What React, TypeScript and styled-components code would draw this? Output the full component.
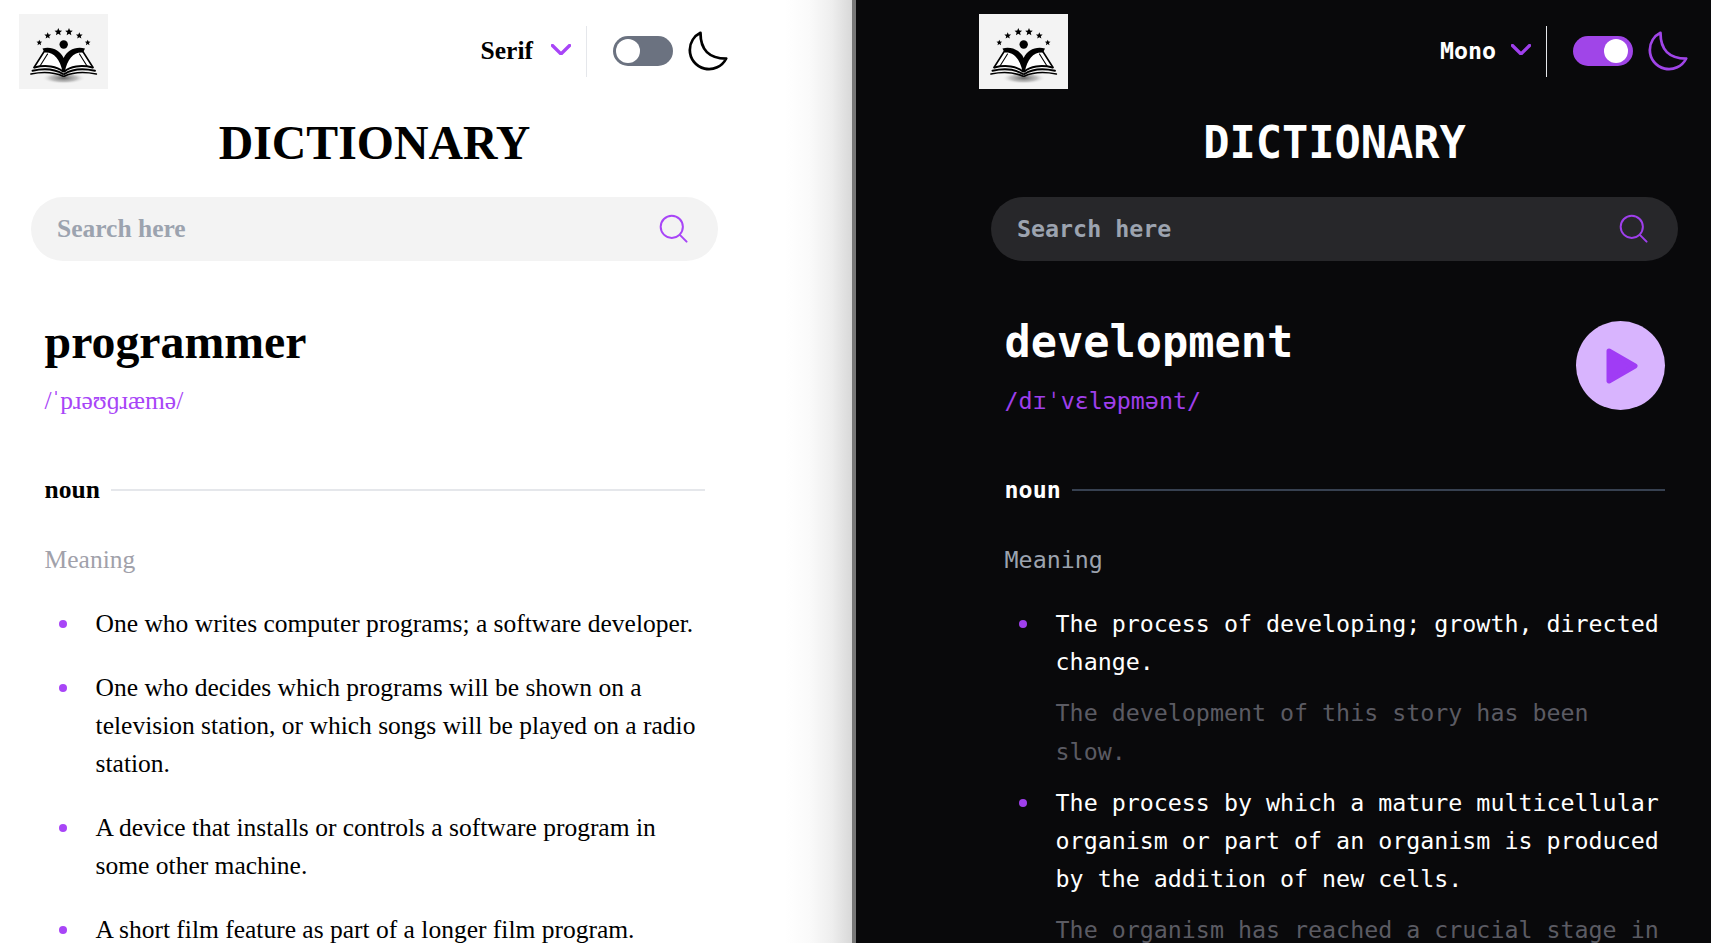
import React from "react";
import styled, { createGlobalStyle } from "styled-components";

const Global = createGlobalStyle`
  html, body { margin: 0; padding: 0; height: 100%; overflow: hidden; }
  * { box-sizing: border-box; }
`;

const Split = styled.main`
  display: grid;
  grid-template-columns: 852px 4px 855px;
  width: 1711px;
  height: 943px;
  overflow: hidden;
`;

const Pane = styled.section<{ $dark?: boolean }>`
  --fg: ${(p) => (p.$dark ? "#ffffff" : "#000000")};
  --accent: ${(p) => (p.$dark ? "#9f3fec" : "#a845f7")};
  --field: ${(p) => (p.$dark ? "#27272a" : "#f3f3f3")};
  --rule: ${(p) => (p.$dark ? "#374151" : "#e5e7eb")};
  --muted: ${(p) => (p.$dark ? "#9ca3af" : "#a1a1aa")};
  --hint: ${(p) => (p.$dark ? "#5b5b63" : "#71717a")};
  --divider: #e5e7eb;
  --picker-gap: ${(p) => (p.$dark ? "15px" : "18px")};
  --face: ${(p) => (p.$dark ? '"DejaVu Sans Mono", monospace' : '"Liberation Serif", serif')};
  --body-size: ${(p) => (p.$dark ? "23.3px" : "25.5px")};
  --display-size: ${(p) => (p.$dark ? "43.6px" : "47.8px")};
  height: 943px;
  overflow: hidden;
  padding-left: ${(p) => (p.$dark ? "123px" : "19px")};
  background: ${(p) =>
    p.$dark
      ? "#09090b"
      : "linear-gradient(to right, #fff 0, #fff 785px, #fafafa 810px, #eee 832px, #d8d8d8 852px)"};
  color: var(--fg);
  font-family: var(--face);
  font-size: var(--body-size);
  line-height: 38.4px;
`;

const Seam = styled.div`
  background: #787878;
`;

const Column = styled.div`
  width: 711px;
`;

const Header = styled.header`
  display: flex;
  align-items: center;
  justify-content: space-between;
  padding: 14px 2px 0 0;
`;

const LogoBox = styled.svg`
  display: block;
  width: 89px;
  height: 75px;
  flex: none;
`;

const Controls = styled.div`
  display: flex;
  align-items: center;
  margin-bottom: 1px;
`;

const FontPicker = styled.button`
  display: flex;
  align-items: center;
  gap: var(--picker-gap);
  padding: 0 15px 0 0;
  border: 0;
  background: none;
  color: var(--fg);
  font: bold var(--body-size) / 38.4px var(--face);
`;

const Chevron = styled.svg`
  width: 20px;
  height: 11.5px;
  margin-bottom: 3px;
  fill: none;
  stroke: var(--accent);
  stroke-width: 2.3;
  stroke-linecap: round;
  stroke-linejoin: round;
`;

const VRule = styled.span`
  width: 1px;
  height: 51px;
  background: var(--divider);
  margin-right: 26px;
`;

const Toggle = styled.button<{ $on?: boolean }>`
  position: relative;
  width: 60px;
  height: 30px;
  padding: 0;
  border: 0;
  border-radius: 15px;
  background: ${(p) => (p.$on ? "#a045e8" : "#6b7280")};
  &::after {
    content: "";
    position: absolute;
    top: 3px;
    left: ${(p) => (p.$on ? "31px" : "3px")};
    width: 24px;
    height: 24px;
    border-radius: 50%;
    background: #fff;
  }
`;

const Moon = styled.svg<{ $on?: boolean }>`
  width: 40px;
  height: 40px;
  margin-left: 15px;
  fill: none;
  stroke: ${(p) => (p.$on ? "#a045e8" : "#000")};
  stroke-width: 1.5;
  stroke-linecap: round;
  stroke-linejoin: round;
`;

const Title = styled.h1`
  margin: 18px 0 0;
  text-align: center;
  font-size: var(--display-size);
  line-height: 72px;
  font-weight: 700;
`;

const SearchBar = styled.form`
  display: flex;
  align-items: center;
  height: 64px;
  margin: 18px 12px 0;
  padding: 0 29px 0 26px;
  border-radius: 32px;
  background: var(--field);
`;

const SearchInput = styled.input`
  flex: 1;
  min-width: 0;
  padding: 0;
  border: 0;
  outline: 0;
  background: none;
  color: var(--fg);
  font: bold var(--body-size) / 38.4px var(--face);
  &::placeholder {
    color: #9ca3af;
    opacity: 1;
  }
`;

const SearchIcon = styled.svg`
  width: 30px;
  height: 30px;
  fill: none;
  stroke: var(--accent);
  stroke-width: 1.2;
  stroke-linecap: round;
  stroke-linejoin: round;
`;

const Entry = styled.article`
  padding: 49px 25px 0 25.6px;
`;

const WordRow = styled.div`
  display: flex;
  align-items: center;
  justify-content: space-between;
  min-height: 110.4px;
`;

const Word = styled.h2`
  margin: 0 0 8px;
  font-size: var(--display-size);
  line-height: 64px;
  font-weight: 700;
`;

const Phonetic = styled.p`
  margin: 0;
  color: var(--accent);
`;

const PlayButton = styled.button`
  display: flex;
  align-items: center;
  justify-content: center;
  width: 89px;
  height: 89px;
  padding: 2px 0 0 3px;
  border: 0;
  border-radius: 50%;
  background: #d8b4fe;
`;

const PlayGlyph = styled.svg`
  width: 36px;
  height: 40px;
  fill: #a03cf5;
  stroke: #a03cf5;
  stroke-width: 5;
  stroke-linejoin: round;
`;

const PartRow = styled.div`
  display: flex;
  align-items: center;
  gap: 11px;
  margin-top: 49px;
  padding-top: 2px;
  font-weight: 700;
  &::after {
    content: "";
    flex: 1;
    height: 2px;
    margin-top: -2px;
    background: var(--rule);
  }
`;

const Label = styled.p`
  margin: 31px 0 0;
  color: var(--muted);
`;

const Senses = styled.ul`
  margin: 26px 0 0;
  padding: 0 0 0 14px;
  list-style: none;
  line-height: 38.2px;
`;

const Sense = styled.li`
  display: grid;
  grid-template-columns: 8px 1fr;
  column-gap: 29px;
  padding-bottom: 12.8px;
  &::before {
    content: "";
    grid-row: 1;
    grid-column: 1;
    width: 8px;
    height: 8px;
    margin-top: 15px;
    border-radius: 50%;
    background: var(--accent);
  }
`;

const Definition = styled.p`
  grid-column: 2;
  margin: 0 0 12.8px;
`;

const Example = styled.p`
  grid-column: 2;
  margin: 0;
  color: var(--hint);
`;

const Star = ({ cx, cy, r }: { cx: number; cy: number; r: number }) => {
  const pts = Array.from({ length: 10 }, (_, i) => {
    const a = -Math.PI / 2 + (i * Math.PI) / 5;
    const d = i % 2 ? r * 0.45 : r;
    return `${(cx + d * Math.cos(a)).toFixed(2)},${(cy + d * Math.sin(a)).toFixed(2)}`;
  }).join(" ");
  return <polygon points={pts} fill="#000" />;
};

const Logo = ({ id }: { id: string }) => (
  <LogoBox viewBox="0 0 89 75" aria-label="Dictionary logo">
    <defs>
      <radialGradient id={id}>
        <stop offset="0" stopColor="#666" />
        <stop offset="0.6" stopColor="#aaa" stopOpacity="0.7" />
        <stop offset="1" stopColor="#f3f3f3" stopOpacity="0" />
      </radialGradient>
    </defs>
    <rect width="89" height="75" fill="#f3f3f3" />
    <ellipse cx="44.7" cy="64" rx="22" ry="6" fill={`url(#${id})`} />
    <Star cx={20.3} cy={28.7} r={3} />
    <Star cx={28.7} cy={21.7} r={3.5} />
    <Star cx={39.3} cy={18} r={4} />
    <Star cx={50} cy={18} r={4} />
    <Star cx={60.3} cy={21.7} r={3.5} />
    <Star cx={68.7} cy={28.7} r={3} />
    <circle cx="44.7" cy="30.5" r="4.2" fill="#000" />
    <path
      fill="#fff"
      d="M26 36 L15 55 C26 53 38 54 44.7 59 C51 54 63 53 74 55 L63.5 36 C55 38 48 44 44.7 52 C41 44 34 38 26 36 Z"
    />
    <path
      fill="#000"
      d="M23.5 34.5 C32 32 41 36 44.7 44 C48 36 57 32 66 34.5 L64 38.5 C55 37.5 48.5 44 45.8 58 L43.6 58 C41 44 34 37.5 25.5 38.5 Z"
    />
    <g fill="none" stroke="#000" strokeLinecap="round">
      <path strokeWidth="1.6" d="M25.5 37 L15 53.5" />
      <path strokeWidth="1.6" d="M63.5 37 L74 53.5" />
      <path strokeWidth="1.1" d="M28.5 40 L21 52" />
      <path strokeWidth="1.1" d="M60.5 40 L68 52" />
      <path strokeWidth="2" d="M15.5 53.5 C27 50.5 38 52.5 44 57.5" />
      <path strokeWidth="2" d="M73.5 53.5 C62 50.5 51 52.5 45.4 57.5" />
      <path strokeWidth="1.9" d="M13.5 56.8 C26 54 37 55.8 44 60" />
      <path strokeWidth="1.9" d="M76 56.8 C63 54 52 55.8 45.4 60" />
      <path strokeWidth="1.7" d="M12 60 C25 57.3 36 58.6 44.2 62.2" />
      <path strokeWidth="1.7" d="M77.3 60 C64 57.3 53 58.6 45.2 62.2" />
    </g>
  </LogoBox>
);

const ChevronIcon = () => (
  <Chevron viewBox="0 0 14 8" aria-hidden>
    <path d="M1 1l6 6 6-6" />
  </Chevron>
);

type SenseData = { text: string; example?: string };
type Panel = {
  dark?: boolean;
  font: string;
  word: string;
  phonetic: string;
  senses: SenseData[];
  playable?: boolean;
};

const panels: Panel[] = [
  {
    font: "Serif",
    word: "programmer",
    phonetic: "/ˈpɹəʊɡɹæmə/",
    senses: [
      { text: "One who writes computer programs; a software developer." },
      {
        text: "One who decides which programs will be shown on a television station, or which songs will be played on a radio station.",
      },
      { text: "A device that installs or controls a software program in some other machine." },
      { text: "A short film feature as part of a longer film program." },
    ],
  },
  {
    dark: true,
    font: "Mono",
    word: "development",
    phonetic: "/dɪˈvɛləpmənt/",
    playable: true,
    senses: [
      {
        text: "The process of developing; growth, directed change.",
        example: "The development of this story has been slow.",
      },
      {
        text: "The process by which a mature multicellular organism or part of an organism is produced by the addition of new cells.",
        example: "The organism has reached a crucial stage in its development.",
      },
    ],
  },
];

const DictionaryPane = ({ panel, index }: { panel: Panel; index: number }) => (
  <Pane $dark={panel.dark}>
    <Column>
      <Header>
        <Logo id={`logo-shadow-${index}`} />
        <Controls>
          <FontPicker type="button">
            {panel.font}
            <ChevronIcon />
          </FontPicker>
          <VRule />
          <Toggle type="button" aria-label="Theme" $on={panel.dark} />
          <Moon viewBox="0 0 22 22" aria-hidden $on={panel.dark}>
            <path d="M1 10.449a10.544 10.544 0 0 0 19.993 4.686C11.544 15.135 6.858 10.448 6.858 1A10.545 10.545 0 0 0 1 10.449Z" />
          </Moon>
        </Controls>
      </Header>
      <Title>DICTIONARY</Title>
      <SearchBar>
        <SearchInput placeholder="Search here" />
        <SearchIcon viewBox="0 0 18 18" aria-hidden>
          <path d="m12.663 12.663 3.887 3.887M1 7.664a6.665 6.665 0 1 0 13.33 0 6.665 6.665 0 0 0-13.33 0Z" />
        </SearchIcon>
      </SearchBar>
      <Entry>
        <WordRow>
          <div>
            <Word>{panel.word}</Word>
            <Phonetic>{panel.phonetic}</Phonetic>
          </div>
          {panel.playable && (
            <PlayButton type="button" aria-label="Play">
              <PlayGlyph viewBox="0 0 36 40" aria-hidden>
                <path d="M5 5 L31 20 L5 35 Z" />
              </PlayGlyph>
            </PlayButton>
          )}
        </WordRow>
        <PartRow>noun</PartRow>
        <Label>Meaning</Label>
        <Senses>
          {panel.senses.map((s) => (
            <Sense key={s.text}>
              <Definition>{s.text}</Definition>
              {s.example && <Example>{s.example}</Example>}
            </Sense>
          ))}
        </Senses>
      </Entry>
    </Column>
  </Pane>
);

export default function App() {
  return (
    <>
      <Global />
      <Split>
        <DictionaryPane panel={panels[0]} index={0} />
        <Seam />
        <DictionaryPane panel={panels[1]} index={1} />
      </Split>
    </>
  );
}
